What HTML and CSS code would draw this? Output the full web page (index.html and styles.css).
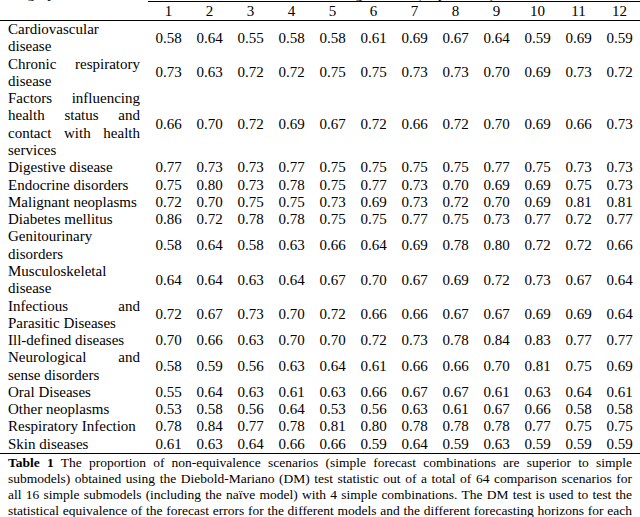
FILE: index.html
```html
<!DOCTYPE html>
<html lang="en">
<head>
<meta charset="utf-8">
<title>Table 1</title>
<link rel="stylesheet" href="styles.css">
</head>
<body>
<div class="page">
<table class="data">
<colgroup>
<col class="col-cat">
<col class="col-h"><col class="col-h"><col class="col-h"><col class="col-h"><col class="col-h"><col class="col-h">
<col class="col-h"><col class="col-h"><col class="col-h"><col class="col-h"><col class="col-h"><col class="col-h">
</colgroup>
<thead>
<tr class="head-top">
<th class="cat-head" rowspan="2">Category</th>
<th class="spanner" colspan="12">Forecasting horizon (steps ahead)</th>
</tr>
<tr class="head-num">
<th>1</th><th>2</th><th>3</th><th>4</th><th>5</th><th>6</th><th>7</th><th>8</th><th>9</th><th>10</th><th>11</th><th>12</th>
</tr>
</thead>
<tbody>
<tr><td class="cat">Cardiovascular disease</td><td>0.58</td><td>0.64</td><td>0.55</td><td>0.58</td><td>0.58</td><td>0.61</td><td>0.69</td><td>0.67</td><td>0.64</td><td>0.59</td><td>0.69</td><td>0.59</td></tr>
<tr><td class="cat">Chronic respiratory disease</td><td>0.73</td><td>0.63</td><td>0.72</td><td>0.72</td><td>0.75</td><td>0.75</td><td>0.73</td><td>0.73</td><td>0.70</td><td>0.69</td><td>0.73</td><td>0.72</td></tr>
<tr><td class="cat">Factors influencing health status and contact with health services</td><td>0.66</td><td>0.70</td><td>0.72</td><td>0.69</td><td>0.67</td><td>0.72</td><td>0.66</td><td>0.72</td><td>0.70</td><td>0.69</td><td>0.66</td><td>0.73</td></tr>
<tr><td class="cat">Digestive disease</td><td>0.77</td><td>0.73</td><td>0.73</td><td>0.77</td><td>0.75</td><td>0.75</td><td>0.75</td><td>0.75</td><td>0.77</td><td>0.75</td><td>0.73</td><td>0.73</td></tr>
<tr><td class="cat">Endocrine disorders</td><td>0.75</td><td>0.80</td><td>0.73</td><td>0.78</td><td>0.75</td><td>0.77</td><td>0.73</td><td>0.70</td><td>0.69</td><td>0.69</td><td>0.75</td><td>0.73</td></tr>
<tr><td class="cat">Malignant neoplasms</td><td>0.72</td><td>0.70</td><td>0.75</td><td>0.75</td><td>0.73</td><td>0.69</td><td>0.73</td><td>0.72</td><td>0.70</td><td>0.69</td><td>0.81</td><td>0.81</td></tr>
<tr><td class="cat">Diabetes mellitus</td><td>0.86</td><td>0.72</td><td>0.78</td><td>0.78</td><td>0.75</td><td>0.75</td><td>0.77</td><td>0.75</td><td>0.73</td><td>0.77</td><td>0.72</td><td>0.77</td></tr>
<tr><td class="cat">Genitourinary disorders</td><td>0.58</td><td>0.64</td><td>0.58</td><td>0.63</td><td>0.66</td><td>0.64</td><td>0.69</td><td>0.78</td><td>0.80</td><td>0.72</td><td>0.72</td><td>0.66</td></tr>
<tr><td class="cat">Musculoskeletal disease</td><td>0.64</td><td>0.64</td><td>0.63</td><td>0.64</td><td>0.67</td><td>0.70</td><td>0.67</td><td>0.69</td><td>0.72</td><td>0.73</td><td>0.67</td><td>0.64</td></tr>
<tr><td class="cat">Infectious and Parasitic Diseases</td><td>0.72</td><td>0.67</td><td>0.73</td><td>0.70</td><td>0.72</td><td>0.66</td><td>0.66</td><td>0.67</td><td>0.67</td><td>0.69</td><td>0.69</td><td>0.64</td></tr>
<tr><td class="cat">Ill-defined diseases</td><td>0.70</td><td>0.66</td><td>0.63</td><td>0.70</td><td>0.70</td><td>0.72</td><td>0.73</td><td>0.78</td><td>0.84</td><td>0.83</td><td>0.77</td><td>0.77</td></tr>
<tr><td class="cat">Neurological and sense disorders</td><td>0.58</td><td>0.59</td><td>0.56</td><td>0.63</td><td>0.64</td><td>0.61</td><td>0.66</td><td>0.66</td><td>0.70</td><td>0.81</td><td>0.75</td><td>0.69</td></tr>
<tr><td class="cat">Oral Diseases</td><td>0.55</td><td>0.64</td><td>0.63</td><td>0.61</td><td>0.63</td><td>0.66</td><td>0.67</td><td>0.67</td><td>0.61</td><td>0.63</td><td>0.64</td><td>0.61</td></tr>
<tr><td class="cat">Other neoplasms</td><td>0.53</td><td>0.58</td><td>0.56</td><td>0.64</td><td>0.53</td><td>0.56</td><td>0.63</td><td>0.61</td><td>0.67</td><td>0.66</td><td>0.58</td><td>0.58</td></tr>
<tr><td class="cat">Respiratory Infection</td><td>0.78</td><td>0.84</td><td>0.77</td><td>0.78</td><td>0.81</td><td>0.80</td><td>0.78</td><td>0.78</td><td>0.78</td><td>0.77</td><td>0.75</td><td>0.75</td></tr>
<tr class="last"><td class="cat">Skin diseases</td><td>0.61</td><td>0.63</td><td>0.64</td><td>0.66</td><td>0.66</td><td>0.59</td><td>0.64</td><td>0.59</td><td>0.63</td><td>0.59</td><td>0.59</td><td>0.59</td></tr>
</tbody>
</table>
<p class="caption"><b>Table 1</b> The proportion of non-equivalence scenarios (simple forecast combinations are superior to simple<br>submodels) obtained using the Diebold-Mariano (DM) test statistic out of a total of 64 comparison scenarios for<br>all 16 simple submodels (including the naïve model) with 4 simple combinations. The DM test is used to test the<br>statistical equivalence of the forecast errors for the different models and the different forecasting horizons for each</p>
</div>
</body>
</html>
```

FILE: styles.css
```css
html, body {
  margin: 0;
  padding: 0;
  background: #ffffff;
}

body {
  font-family: "Liberation Serif", "Times New Roman", serif;
  color: #000000;
}

.page {
  width: 640px;
  height: 517px;
  overflow: hidden;
}

.data {
  border-collapse: collapse;
  table-layout: fixed;
  width: 640px;
  margin-top: -14px;
  font-size: 15px;
  line-height: 17.28px;
}

.col-cat {
  width: 148px;
}

.col-h {
  width: 41px;
}

.data th {
  font-weight: normal;
  padding: 0;
}

.head-top th {
  line-height: 15px;
}

.cat-head {
  text-align: left;
  vertical-align: top;
  padding: 0 8px;
  border-bottom: 1px solid #000;
}

.spanner {
  text-align: center;
  border-bottom: 1px solid #000;
}

.head-num th {
  text-align: center;
  line-height: 17px;
  padding-top: 1px;
  border-bottom: 1px solid #000;
}

.data td {
  padding: 0;
  text-align: center;
  vertical-align: middle;
}

.data td.cat {
  padding: 0 8px;
  text-align: justify;
}

.last td {
  border-bottom: 1px solid #000;
}

.caption {
  margin: 1px 0 0;
  padding: 0 8px;
  font-size: 13.5px;
  line-height: 16px;
  text-align: justify;
  text-align-last: justify;
}
```
